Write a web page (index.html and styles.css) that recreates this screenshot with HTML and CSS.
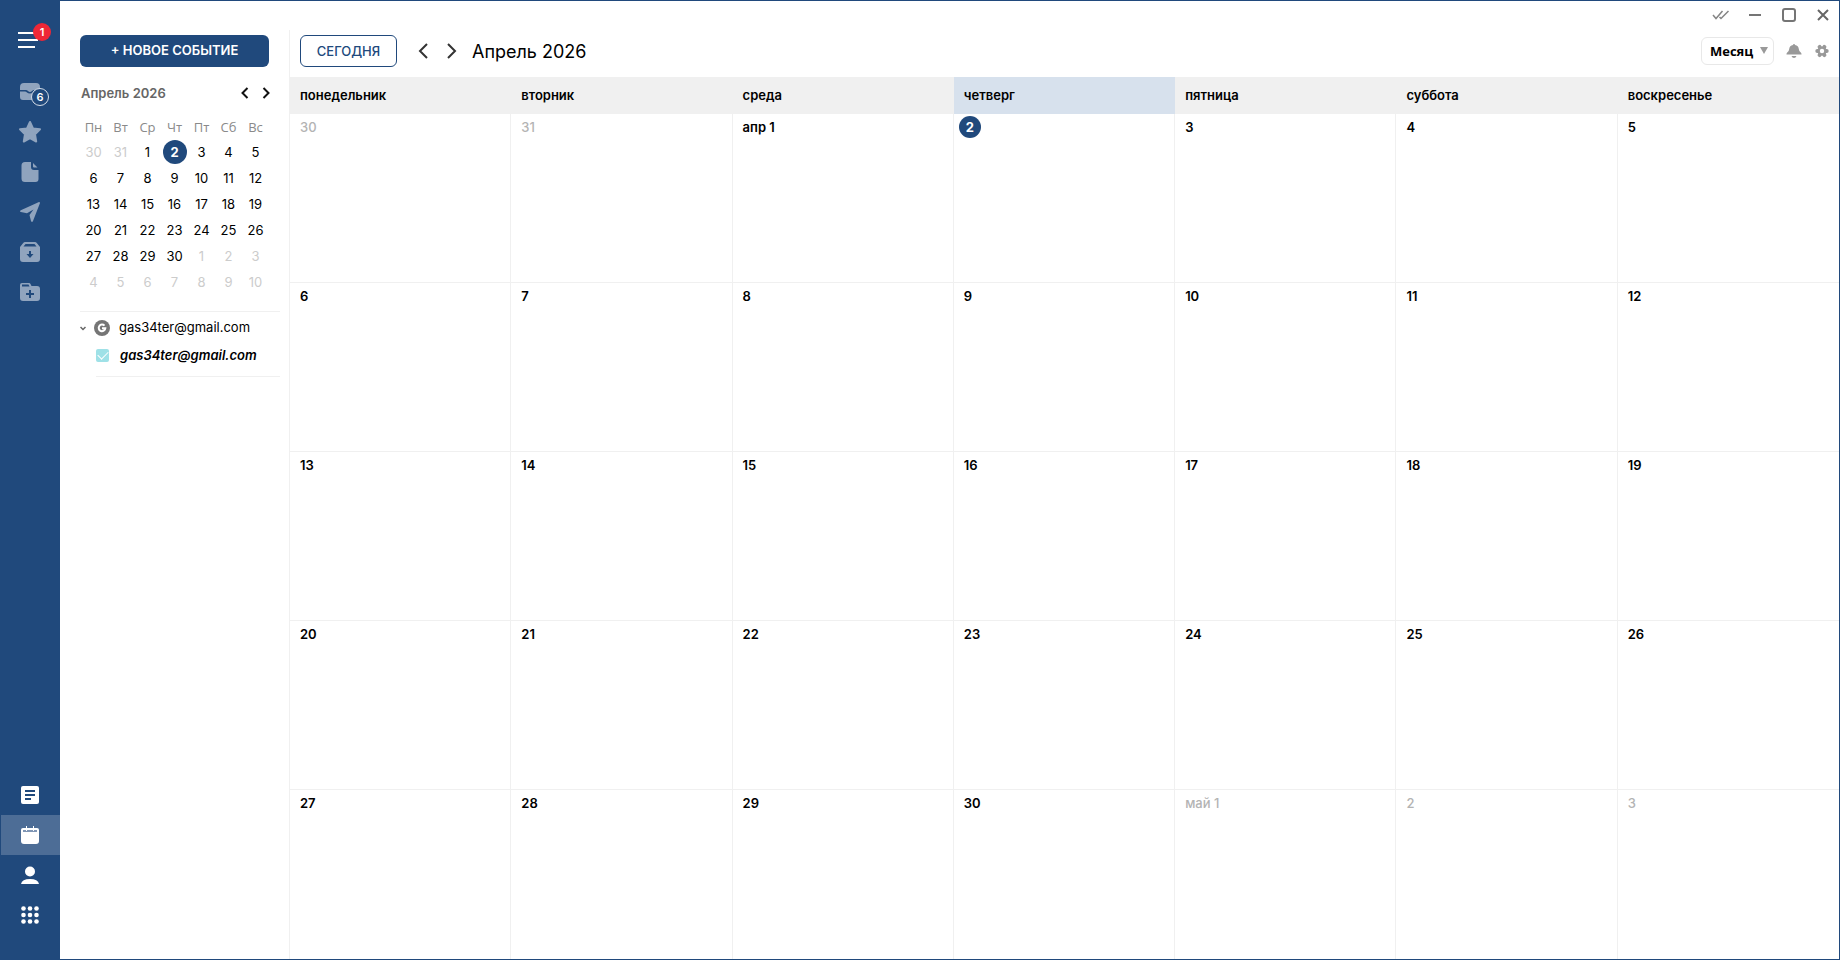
FILE: index.html
```html
<!DOCTYPE html>
<html lang="ru">
<head>
    <meta charset="UTF-8">
    <title>Календарь</title>
    <link rel="stylesheet" href="styles.css">
</head>
<body>
    <div class="app">
        <nav class="sidebar">
            <button class="side-item menu" aria-label="Меню">
                <svg width="24" height="18" viewBox="0 0 24 18" stroke="#fff" stroke-width="2"><path d="M0 2h22M0 9h20M0 16h17"/></svg>
                <span class="badge-new">1</span>
            </button>
            <button class="side-item dim" aria-label="Входящие">
                <svg width="22" height="20" viewBox="0 0 22 20" fill="#90a4be"><path d="M5 1h12a4 4 0 0 1 4 4v3h-6q-1 0-2 1t-2 1q-1 0-2-1T7 8H1V5a4 4 0 0 1 4-4zM1 9.500h5q1 0 2 1t3 1q2 0 3-1t2-1h5V15a3 3 0 0 1-3 3H4a3 3 0 0 1-3-3z"/></svg>
                <span class="badge-count">6</span>
            </button>
            <button class="side-item dim" aria-label="Избранное">
                <svg width="24" height="24" viewBox="0 0 24 24" fill="#90a4be" stroke="#90a4be" stroke-width="2" stroke-linejoin="round"><path d="M12 2l3 6.500 7 .8-5 4.900 1.200 7.300L12 18.200l-6.200 3.300L7 14.200 2 9.300l7-.8z"/></svg>
            </button>
            <button class="side-item dim" aria-label="Черновики">
                <svg width="18" height="20" viewBox="0 0 18 20" fill="#90a4be"><path d="M4 0h6v5a3 3 0 0 0 3 3h4.500v9a3 3 0 0 1-3 3H4a3.500 3.500 0 0 1-3.500-3.500v-13A3.500 3.500 0 0 1 4 0zM12 1l4.500 4.500H13a1 1 0 0 1-1-1z"/></svg>
            </button>
            <button class="side-item dim" aria-label="Отправленные">
                <svg width="20" height="20" viewBox="0 0 20 20" fill="#90a4be"><path d="M19 0q1 0 1 1l-7 18q-1 2-2 0L9.500 13l4-5.500L7 11.200 .8 10q-1.500-.6 0-1.800z"/></svg>
            </button>
            <button class="side-item dim" aria-label="Архив">
                <svg width="20" height="20" viewBox="0 0 20 20"><path fill="#90a4be" d="M5 0h10q1 0 1.800 1L20 5v12a3 3 0 0 1-3 3H3a3 3 0 0 1-3-3V5l3.200-4Q4 0 5 0z"/><path fill="#20497c" d="M5.500 2h9l2 2.500h-13zM9 9h2v3h2.500L10 16l-3.500-4H9z"/></svg>
            </button>
            <button class="side-item dim" aria-label="Создать папку">
                <svg width="20" height="18" viewBox="0 0 20 18"><path fill="#90a4be" d="M2 0h7q1 0 1.500 1l1 2H17a3 3 0 0 1 3 3v9a3 3 0 0 1-3 3H3a3 3 0 0 1-3-3V2a2 2 0 0 1 2-2z"/><path fill="#20497c" d="M2 1.500h6.500l1 2H2zM9 7h2v3h3v2h-3v3H9v-3H6v-2h3z"/></svg>
            </button>
            <div class="side-bottom">
                <button class="side-item" aria-label="Заметки">
                    <svg width="18" height="18" viewBox="0 0 18 18"><rect width="18" height="18" rx="2" fill="#fff"/><path stroke="#20497c" stroke-width="2" d="M4 5h10M4 9h10M4 13h6"/></svg>
                </button>
                <button class="side-item active" aria-label="Календарь">
                    <svg width="18" height="18" viewBox="0 0 18 18"><path fill="#fff" d="M2 2h14a2 2 0 0 1 2 2v11a3 3 0 0 1-3 3H3a3 3 0 0 1-3-3V4a2 2 0 0 1 2-2z"/><path fill="#8096b5" d="M2 4h14v2H2z"/><path stroke="#fff" stroke-width="1" d="M5.500 0v5M12.500 0v5"/></svg>
                </button>
                <button class="side-item" aria-label="Контакты">
                    <svg width="18" height="18" viewBox="0 0 18 18" fill="#fff"><circle cx="9" cy="5.500" r="5"/><path d="M0 18q1-5 9-5t9 5z"/></svg>
                </button>
                <button class="side-item" aria-label="Приложения">
                    <svg width="18" height="18" viewBox="0 0 18 18" fill="#fff"><circle cx="2.500" cy="2.500" r="2.300"/><circle cx="9" cy="2.500" r="2.300"/><circle cx="15.500" cy="2.500" r="2.300"/><circle cx="2.500" cy="9" r="2.300"/><circle cx="9" cy="9" r="2.300"/><circle cx="15.500" cy="9" r="2.300"/><circle cx="2.500" cy="15.500" r="2.300"/><circle cx="9" cy="15.500" r="2.300"/><circle cx="15.500" cy="15.500" r="2.300"/></svg>
                </button>
            </div>
        </nav>

        <div class="content">
            <div class="titlebar">
                <button aria-label="Прочитано"><svg width="18" height="10" viewBox="0 0 18 10" fill="none" stroke="#858585" stroke-width="1.500"><path d="M1 5l3 3.500L10.500 1M7.500 7l1.500 1.500L16.500 1"/></svg></button>
                <button aria-label="Свернуть"><svg width="12" height="12" viewBox="0 0 12 12" stroke="#757575" stroke-width="2"><path d="M0 6h12"/></svg></button>
                <button aria-label="Развернуть"><svg width="14" height="14" viewBox="0 0 14 14" fill="none" stroke="#757575" stroke-width="2"><rect x="1" y="1" width="12" height="12" rx="2"/></svg></button>
                <button aria-label="Закрыть"><svg width="12" height="12" viewBox="0 0 12 12" stroke="#666" stroke-width="2"><path d="M1 1l10 10M11 1L1 11"/></svg></button>
            </div>

            <div class="body">
                <aside class="panel">
                    <button class="new-event">+ НОВОЕ СОБЫТИЕ</button>
                    <div class="mini-head">
                        <span>Апрель 2026</span>
                        <button aria-label="Назад"><svg width="8" height="12" viewBox="0 0 8 12" fill="none" stroke="#111" stroke-width="2"><path d="M6.500 1l-5 5 5 5"/></svg></button>
                        <button aria-label="Вперёд"><svg width="8" height="12" viewBox="0 0 8 12" fill="none" stroke="#111" stroke-width="2"><path d="M1.500 1l5 5-5 5"/></svg></button>
                    </div>
                    <table class="mini">
                        <thead>
                            <tr><th>Пн</th><th>Вт</th><th>Ср</th><th>Чт</th><th>Пт</th><th>Сб</th><th>Вс</th></tr>
                        </thead>
                        <tbody>
                            <tr><td class="off">30</td><td class="off">31</td><td>1</td><td><span class="today">2</span></td><td>3</td><td>4</td><td>5</td></tr>
                            <tr><td>6</td><td>7</td><td>8</td><td>9</td><td>10</td><td>11</td><td>12</td></tr>
                            <tr><td>13</td><td>14</td><td>15</td><td>16</td><td>17</td><td>18</td><td>19</td></tr>
                            <tr><td>20</td><td>21</td><td>22</td><td>23</td><td>24</td><td>25</td><td>26</td></tr>
                            <tr><td>27</td><td>28</td><td>29</td><td>30</td><td class="off">1</td><td class="off">2</td><td class="off">3</td></tr>
                            <tr><td class="off">4</td><td class="off">5</td><td class="off">6</td><td class="off">7</td><td class="off">8</td><td class="off">9</td><td class="off">10</td></tr>
                        </tbody>
                    </table>
                    <div class="accounts">
                        <div class="account">
                            <svg width="6" height="5" viewBox="0 0 6 5" fill="none" stroke="#666" stroke-width="1.500"><path d="M.5 1L3 3.500 5.500 1"/></svg>
                            <svg width="16" height="16" viewBox="0 0 16 16"><circle cx="8" cy="8" r="8" fill="#757575"/><path fill="none" stroke="#fff" stroke-width="2" d="M10.500 5.700A3.300 3.300 0 1 0 11.300 8.300H8"/></svg>
                            <span>gas34ter@gmail.com</span>
                        </div>
                        <label class="calendar">
                            <input type="checkbox" checked>
                            <span>gas34ter@gmail.com</span>
                        </label>
                    </div>
                </aside>

                <main class="main">
                    <header class="toolbar">
                        <button class="today-btn">СЕГОДНЯ</button>
                        <button class="arrow" aria-label="Предыдущий месяц"><svg width="10" height="16" viewBox="0 0 10 16" fill="none" stroke="#333" stroke-width="2"><path d="M9 1L2 8l7 7"/></svg></button>
                        <button class="arrow" aria-label="Следующий месяц"><svg width="10" height="16" viewBox="0 0 10 16" fill="none" stroke="#333" stroke-width="2"><path d="M1 1l7 7-7 7"/></svg></button>
                        <h1>Апрель 2026</h1>
                        <div class="view">
                            <select aria-label="Вид">
                                <option>Месяц</option>
                            </select>
                        </div>
                        <button class="tool" aria-label="Уведомления"><svg width="16" height="14" viewBox="0 0 16 14" fill="#999"><path d="M7 1a1 1 0 0 1 2 0q3.500.5 3.800 4 .2 2.500 2 3.500.7.500.7 1.500v.5H.5V10q0-1 .7-1.500 1.800-1 2-3.500Q3.500 1.500 7 1zM5.500 12h5q-.7 2-2.500 2t-2.500-2z"/></svg></button>
                        <button class="tool" aria-label="Настройки"><svg width="14" height="14" viewBox="0 0 14 14"><g stroke="#999" stroke-width="4" stroke-linecap="round"><path d="M2.300 7h9.400M4.600 2.900l4.800 8.200M9.400 2.900l-4.800 8.200"/></g><circle cx="7" cy="7" r="4.500" fill="#999"/><circle cx="7" cy="7" r="2.200" fill="#fff"/></svg></button>
                    </header>
                    <table class="month">
                        <thead>
                            <tr><th>понедельник</th><th>вторник</th><th>среда</th><th class="current">четверг</th><th>пятница</th><th>суббота</th><th>воскресенье</th></tr>
                        </thead>
                        <tbody>
                            <tr><td class="off">30</td><td class="off">31</td><td>апр 1</td><td><span class="today">2</span></td><td>3</td><td>4</td><td>5</td></tr>
                            <tr><td>6</td><td>7</td><td>8</td><td>9</td><td>10</td><td>11</td><td>12</td></tr>
                            <tr><td>13</td><td>14</td><td>15</td><td>16</td><td>17</td><td>18</td><td>19</td></tr>
                            <tr><td>20</td><td>21</td><td>22</td><td>23</td><td>24</td><td>25</td><td>26</td></tr>
                            <tr><td>27</td><td>28</td><td>29</td><td>30</td><td class="off">май 1</td><td class="off">2</td><td class="off">3</td></tr>
                        </tbody>
                    </table>
                </main>
            </div>
        </div>
    </div>
</body>
</html>
```
FILE: styles.css
```css
* {
    box-sizing: border-box;
}
body {
    margin: 0;
    font-family: Inter, "Liberation Sans", sans-serif;
    font-size: 13px;
    color: #000;
    background-color: #fff;
}
button {
    padding: 0;
    border: none;
    background: none;
    font-family: inherit;
    cursor: pointer;
}
svg {
    display: block;
    flex: none;
}
table {
    border-collapse: separate;
    border-spacing: 0;
    table-layout: fixed;
    width: 100%;
}
.app {
    display: flex;
    height: 100vh;
    border: 1px solid #20497c;
}

/* sidebar */
.sidebar {
    display: flex;
    flex-direction: column;
    width: 59px;
    padding: 19px 0 24px;
    background-color: #20497c;
}
.side-item {
    position: relative;
    display: flex;
    align-items: center;
    justify-content: center;
    width: 100%;
    height: 40px;
    padding-right: 1px;
}
.menu {
    margin-bottom: 12px;
}
.side-item.active {
    background-color: #4d6d96;
}
.side-bottom {
    margin-top: auto;
}
.badge-new,
.badge-count {
    position: absolute;
    height: 18px;
    width: 18px;
    border-radius: 50%;
    color: #fff;
    font-size: 11px;
    font-weight: 600;
    line-height: 18px;
    text-align: center;
}
.badge-new {
    top: 3px;
    left: 32px;
    background-color: #ee2737;
}
.badge-count {
    top: 16px;
    left: 30px;
    border: 1px solid #d5dde8;
    background-color: #20497c;
    line-height: 16px;
}

/* window buttons */
.content {
    flex: 1;
    display: flex;
    flex-direction: column;
    min-width: 0;
}
.titlebar {
    display: flex;
    justify-content: flex-end;
    height: 29px;
}
.titlebar button {
    display: flex;
    align-items: center;
    justify-content: center;
    width: 34px;
    padding: 0 0 2px 2px;
}
.body {
    flex: 1;
    display: flex;
    min-height: 0;
}

/* left panel */
.panel {
    width: 230px;
    padding: 5px 9px 0 20px;
    border-right: 1px solid #f0f0f0;
}
.new-event {
    display: block;
    width: 189px;
    height: 32px;
    padding-bottom: 2px;
    border-radius: 6px;
    background-color: #20497c;
    color: #fff;
    font-size: 13px;
    font-weight: 600;
}
.mini-head {
    display: flex;
    align-items: center;
    gap: 13px;
    width: 190px;
    height: 24px;
    margin: 14px 0 10px;
    color: #666;
    font-weight: 600;
}
.mini-head span {
    flex: 1;
    padding-left: 1px;
}
.mini {
    width: 189px;
    text-align: center;
}
.mini th {
    height: 24px;
    padding: 0 0 1px;
    color: #8a8a8a;
    font-family: "Open Sans", sans-serif;
    font-weight: 400;
}
.mini td {
    height: 26px;
    padding: 0;
}
.mini .off {
    color: #ccc;
}
.today {
    display: block;
    width: 24px;
    height: 24px;
    margin: 0 auto;
    border-radius: 50%;
    background-color: #20497c;
    color: #fff;
    font-weight: 700;
    line-height: 24px;
    text-align: center;
}
.accounts {
    margin-top: 16px;
    border-top: 1px solid #f0f0f0;
}
.account {
    display: flex;
    align-items: center;
    height: 32px;
}
.account span {
    padding-bottom: 2px;
}
.account svg + svg {
    margin: 0 9px 0 8px;
}
.calendar {
    display: flex;
    align-items: center;
    height: 33px;
    margin-left: 16px;
    padding-bottom: 10px;
    border-bottom: 1px solid #f0f0f0;
    font-style: italic;
    font-weight: 600;
}
.calendar input {
    appearance: none;
    display: flex;
    align-items: center;
    justify-content: center;
    width: 13px;
    height: 13px;
    margin: 0 11px 0 0;
    border-radius: 2px;
    background-color: #9fe1e7;
}
.calendar input:checked::after {
    content: "";
    width: 9px;
    height: 5px;
    margin-bottom: 3px;
    border: solid #fff;
    border-width: 0 0 1px 1px;
    transform: rotate(-45deg);
}

/* month view */
.main {
    flex: 1;
    display: flex;
    flex-direction: column;
    min-width: 0;
}
.toolbar {
    display: flex;
    align-items: center;
    height: 47px;
    padding: 5px 4px 10px 10px;
}
.today-btn {
    width: 97px;
    height: 32px;
    margin-right: 11px;
    border: 1px solid #20497c;
    border-radius: 6px;
    color: #20497c;
    font-size: 13px;
    font-weight: 500;
}
.arrow {
    display: flex;
    align-items: center;
    justify-content: center;
    width: 29px;
    height: 32px;
}
.toolbar h1 {
    margin: 0 auto 0 6px;
    font-size: 18px;
    font-weight: 400;
}
.view {
    position: relative;
    margin-right: 5px;
}
.view select {
    appearance: none;
    display: block;
    width: 73px;
    height: 28px;
    padding: 0 8px;
    border: 1px solid #e8e8e8;
    border-radius: 6px;
    background-color: #fff;
    color: #000;
    font-family: "Open Sans", sans-serif;
    font-size: 13px;
    font-weight: 700;
}
.view::after {
    content: "";
    position: absolute;
    top: 10px;
    right: 6px;
    border: solid transparent;
    border-width: 7px 4px 0;
    border-top-color: #999;
    pointer-events: none;
}
.tool {
    display: flex;
    align-items: center;
    justify-content: center;
    width: 30px;
    height: 28px;
}
.tool:last-child {
    width: 26px;
}
.month {
    flex: 1;
    height: calc(100vh - 78px);
    font-weight: 600;
    text-align: left;
}
.month th {
    height: 37px;
    padding: 0 10px 2px;
    background-color: #f0f0f0;
    font-weight: 600;
}
.month th.current {
    background-color: #d7e1ed;
}
.month td {
    height: 20%;
    padding: 5px 10px;
    border-right: 1px solid #f0f0f0;
    border-bottom: 1px solid #f0f0f0;
    line-height: 16px;
    vertical-align: top;
}
.month td:last-child {
    border-right: none;
}
.month tr:last-child td {
    border-bottom: none;
}
.month .off {
    color: #b3b3b3;
    font-weight: 500;
}
.month .today {
    width: 22px;
    height: 22px;
    margin: -3px 0 0 -5px;
    line-height: 22px;
}
```
